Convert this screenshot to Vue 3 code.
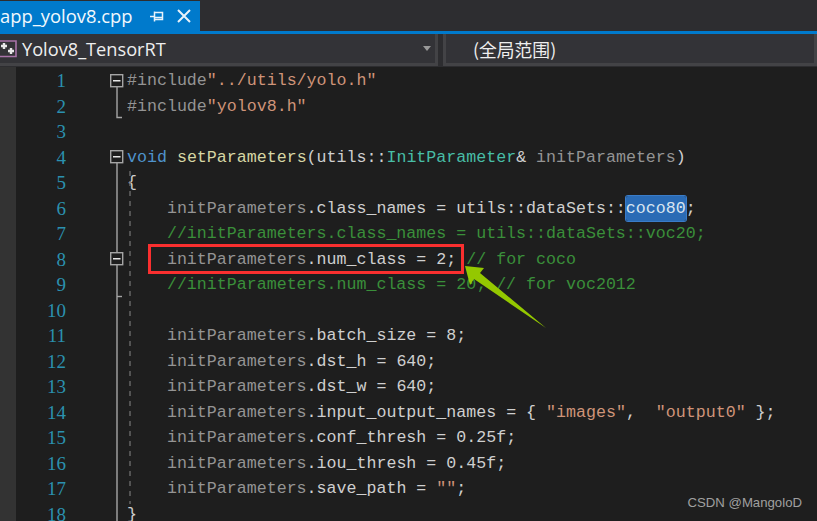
<script setup>
const t = (c, s) => ({ c, s })
const lines = [
  [t('pp', '#include'), t('st', '"../utils/yolo.h"')],
  [t('pp', '#include'), t('st', '"yolov8.h"')],
  [],
  [t('kw', 'void'), t('tx', ' '), t('fn', 'setParameters'), t('tx', '(utils::'), t('ty', 'InitParameter'), t('tx', '& '), t('pm', 'initParameters'), t('tx', ')')],
  [t('tx', '{')],
  [t('pm', '    initParameters'), t('tx', '.class_names = utils::dataSets::'), t('sel', 'coco80'), t('tx', ';')],
  [t('cm', '    //initParameters.class_names = utils::dataSets::voc20;')],
  [t('pm', '    initParameters'), t('tx', '.num_class = 2; '), t('cm', '// for coco')],
  [t('cm', '    //initParameters.num_class = 20; // for voc2012')],
  [],
  [t('pm', '    initParameters'), t('tx', '.batch_size = 8;')],
  [t('pm', '    initParameters'), t('tx', '.dst_h = 640;')],
  [t('pm', '    initParameters'), t('tx', '.dst_w = 640;')],
  [t('pm', '    initParameters'), t('tx', '.input_output_names = { '), t('st', '"images"'), t('tx', ',  '), t('st', '"output0"'), t('tx', ' };')],
  [t('pm', '    initParameters'), t('tx', '.conf_thresh = 0.25f;')],
  [t('pm', '    initParameters'), t('tx', '.iou_thresh = 0.45f;')],
  [t('pm', '    initParameters'), t('tx', '.save_path = '), t('st', '""'), t('tx', ';')],
  [t('tx', '}')],
]
</script>

<template>
  <div class="ide">
    <div class="tabbar">
      <div class="tab">
        <span class="tabname">app_yolov8.cpp</span>
        <svg class="pin" width="14" height="13" viewBox="0 0 14 13">
          <path d="M0 6.500h4M4.500 1.500v10M4.500 2.500h8v7h-8M5 7.500h7" fill="none" stroke="#e8f2fa" stroke-width="1.500" />
        </svg>
        <svg class="close" width="14" height="14" viewBox="0 0 14 14">
          <path d="M1 1l12 12M13 1L1 13" stroke="#e8f2fa" stroke-width="2" />
        </svg>
      </div>
    </div>
    <div class="combos">
      <div class="combo left">
        <svg class="project" width="17" height="18" viewBox="0 0 17 18">
          <path d="M0 1h16v15.500H0" fill="none" stroke="#a873a8" stroke-width="1.600" />
          <path d="M4 3v6M1 6h6M11 8v6M8 11h6" stroke="#e8e8e8" stroke-width="2.400" />
        </svg>
        <span class="comboname">Yolov8_TensorRT</span>
        <span class="caret"></span>
      </div>
      <div class="combo right">
        <span class="scope">(全局范围)</span>
      </div>
    </div>
    <div class="editor">
      <div class="strip"></div>
      <div class="nums">
        <div v-for="(_, i) in lines" :key="i" class="num">{{ i + 1 }}</div>
      </div>
      <div class="fold">
        <svg class="foldart" width="30" height="454" viewBox="0 0 30 454">
          <g fill="none" stroke="#a5a5a5" stroke-width="1.400">
            <path d="M9 19V50.500H14" />
            <path d="M9 96V454" />
            <path d="M9 229.500H14" />
            <rect x="2.700" y="7.700" width="12" height="12" fill="#1e1e1e" />
            <rect x="2.700" y="83.700" width="12" height="12" fill="#1e1e1e" />
            <rect x="2.700" y="185.700" width="12" height="12" fill="#1e1e1e" />
            <path d="M5 13.700h7.500M5 89.700h7.500M5 191.700h7.500" stroke="#e6e6e6" stroke-width="1.600" />
          </g>
          <path d="M22 104V437" stroke="#6a6a6a" stroke-width="1.400" stroke-dasharray="5 5" fill="none" />
        </svg>
      </div>
      <div class="code">
        <div v-for="(line, i) in lines" :key="i" class="line">
          <span v-for="(tok, j) in line" :key="j" :class="tok.c">{{ tok.s }}</span>
        </div>
      </div>
      <div class="redbox"></div>
      <svg class="arrow" width="90" height="70" viewBox="460 262 90 70">
        <polygon points="465,266 484,268 480,273 546,328 474,279 470,285" fill="#94c800" />
      </svg>
      <div class="mark">CSDN @MangoloD</div>
    </div>
  </div>
</template>

<style scoped>
.ide {
  width: 817px;
  height: 521px;
  overflow: hidden;
  background: #1e1e1e;
  display: flex;
  flex-direction: column;
}
.tabbar {
  height: 34px;
  box-sizing: border-box;
  background: #2d2d30;
  border-bottom: 3px solid #007acc;
  padding-top: 1px;
  flex: none;
}
.tab {
  width: 200px;
  height: 30px;
  background: #007acc;
  display: flex;
  align-items: center;
  overflow: hidden;
}
.tabname {
  font: 18.400px/30px "Open Sans", "Liberation Sans", sans-serif;
  color: #f2f8fc;
  width: 149px;
  flex: none;
  white-space: nowrap;
}
.pin {
  margin-left: 1px;
  flex: none;
}
.close {
  margin-left: 13px;
  flex: none;
}
.combos {
  height: 33px;
  display: flex;
  gap: 5px;
  background: #2d2d30;
  flex: none;
}
.combo {
  box-sizing: border-box;
  height: 32px;
  background: #333337;
  border: solid #434346;
  border-width: 0 3px 3px 0;
  display: flex;
  align-items: center;
}
.left {
  width: 438px;
  flex: none;
}
.right {
  flex: 1;
  border-left-width: 3px;
}
.project {
  flex: none;
}
.comboname {
  font: 18.200px/28px "Open Sans", "Liberation Sans", sans-serif;
  color: #eeeeee;
  margin-left: 5px;
  flex: 1;
}
.caret {
  width: 0;
  height: 0;
  border: 4px solid transparent;
  border-top: 5px solid #999999;
  margin: 4px 4px 0 0;
}
.scope {
  font: 17.800px/28px "Noto Sans CJK SC", "Liberation Sans", sans-serif;
  color: #eeeeee;
  margin-left: 27px;
}
.editor {
  position: relative;
  flex: 1;
  display: flex;
  min-height: 0;
  font: 16.640px/25.500px "Liberation Mono", monospace;
  white-space: pre;
  padding-top: 1px;
}
.strip {
  position: absolute;
  left: 0;
  top: 0;
  bottom: 0;
  width: 16px;
  background: #333333;
}
.nums {
  width: 66px;
  flex: none;
  text-align: right;
  color: #2b91af;
  font-family: "Liberation Serif", serif;
  font-size: 19px;
}
.fold {
  width: 61px;
  flex: none;
  position: relative;
}
.foldart {
  position: absolute;
  left: 42px;
  top: -1px;
}
.code {
  flex: 1;
  color: #cfcfcf;
}
.line {
  height: 25.500px;
}
.pp,
.pm {
  color: #949494;
}
.st {
  color: #cf9479;
}
.kw {
  color: #4f93cc;
}
.fn {
  color: #d6d6a4;
}
.ty {
  color: #48bda6;
}
.cm {
  color: #3a8f3a;
}
.sel {
  background: #2a6bb5;
  color: #d8e4f0;
  border-radius: 2px;
  box-shadow: 0 0 0 1px #3a7cc8;
  padding: 3px 0;
}
.redbox {
  position: absolute;
  left: 148px;
  top: 177px;
  width: 310px;
  height: 24px;
  border: 3px solid #fa2f2f;
}
.arrow {
  position: absolute;
  left: 460px;
  top: 195px;
}
.mark {
  position: absolute;
  right: 15px;
  bottom: 9px;
  font: 13.200px/18px "Liberation Sans", sans-serif;
  color: #a0a0a0;
}
</style>
